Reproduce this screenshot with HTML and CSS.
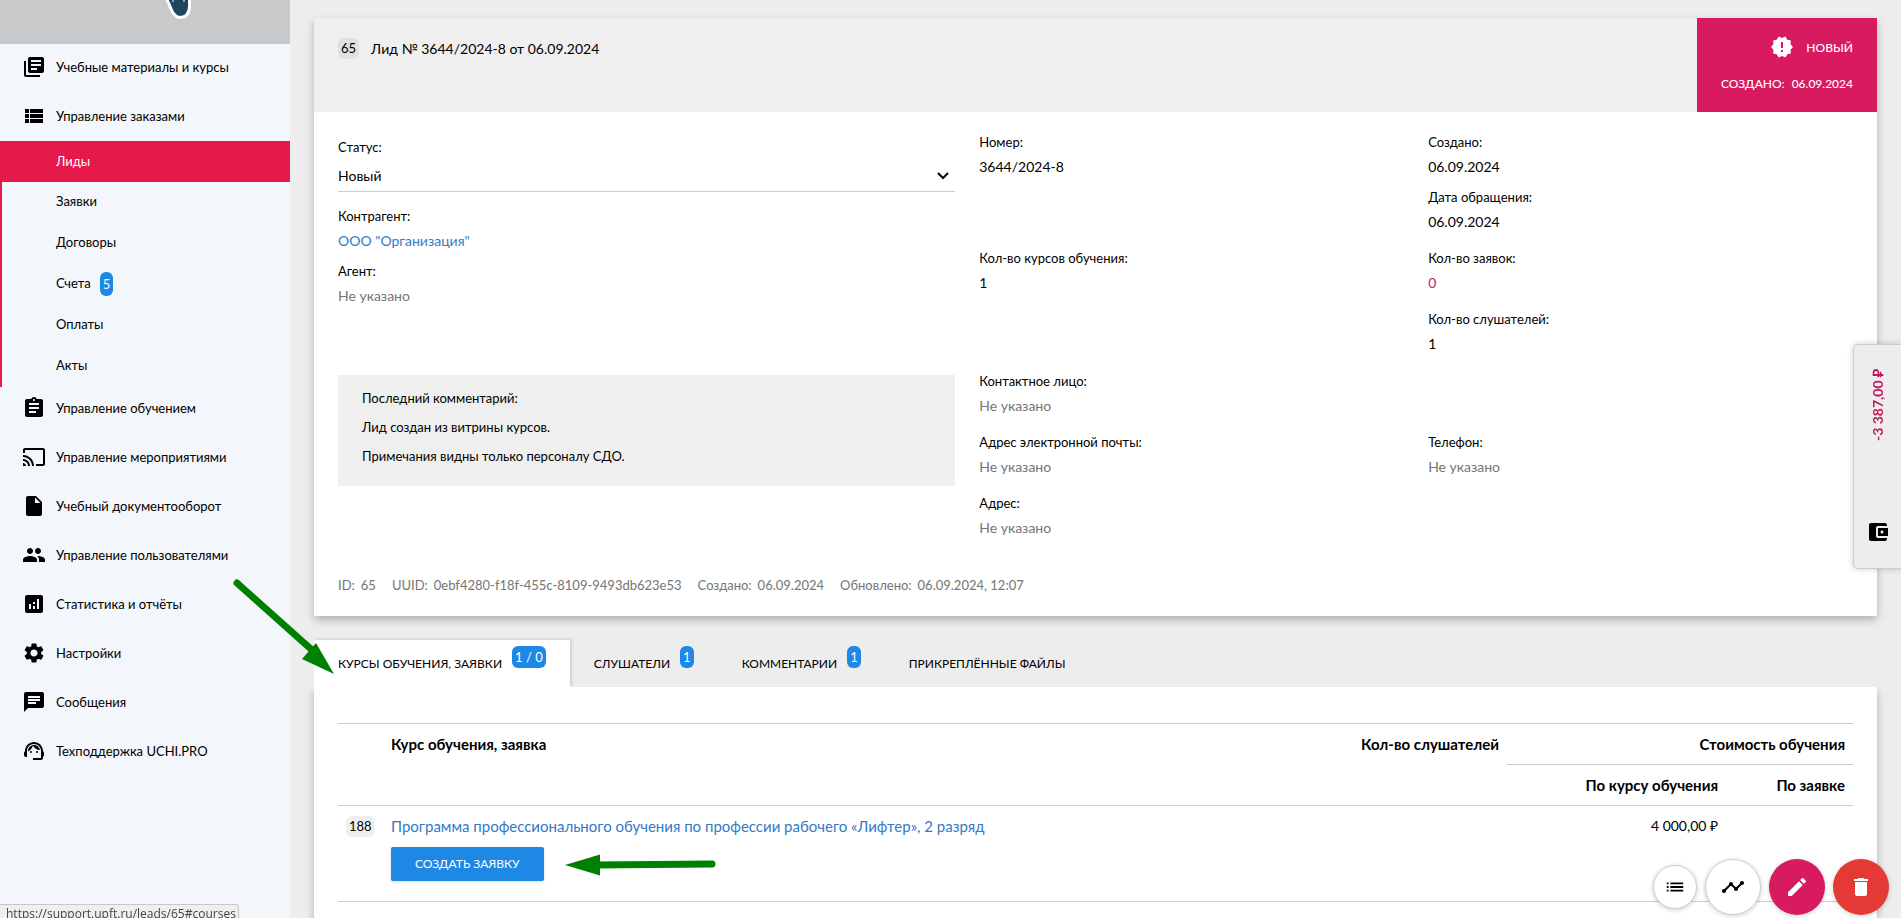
FILE: index.html
```
<!DOCTYPE html>
<html lang="ru">
<head>
<meta charset="utf-8">
<title>Лид № 3644/2024-8 от 06.09.2024</title>
<meta name="viewport" content="width=device-width, initial-scale=1">
<link rel="stylesheet" href="styles.css">
</head>
<body>
<div class="app">
  <aside class="sidebar">
    <div class="brand">
      <svg class="brand-mark" viewBox="0 0 30 20" aria-hidden="true"><path d="M2 -3 L4 2 C6 4 7 16 15 17.500 C23 17.500 25.500 12 25.500 6 V-3 Z" fill="#20465f" stroke="#fff" stroke-width="3"/><path d="M9 0v2M20 0v2" stroke="#fff" stroke-width="1"/></svg>
    </div>
    <nav>
      <ul class="menu">
        <li><a class="menu-link" href="#"><svg class="icon" viewBox="0 0 24 24"><path d="M4 6H2v14c0 1.100.9 2 2 2h14v-2H4V6zm16-4H8c-1.100 0-2 .9-2 2v12c0 1.100.9 2 2 2h12c1.100 0 2-.9 2-2V4c0-1.100-.9-2-2-2zm-1 9H9V9h10v2zm-4 4H9v-2h6v2zm4-8H9V5h10v2z"/></svg>Учебные материалы и курсы</a></li>
        <li><a class="menu-link" href="#"><svg class="icon" viewBox="0 0 24 24"><path d="M3 14h4v-4H3v4zm0 5h4v-4H3v4zM3 9h4V5H3v4zm5 5h13v-4H8v4zm0 5h13v-4H8v4zM8 5v4h13V5H8z"/></svg>Управление заказами</a>
          <ul class="submenu">
            <li><a class="submenu-link active" href="#">Лиды</a></li>
            <li><a class="submenu-link" href="#">Заявки</a></li>
            <li><a class="submenu-link" href="#">Договоры</a></li>
            <li><a class="submenu-link" href="#">Счета <span class="badge">5</span></a></li>
            <li><a class="submenu-link" href="#">Оплаты</a></li>
            <li><a class="submenu-link" href="#">Акты</a></li>
          </ul>
        </li>
        <li><a class="menu-link" href="#"><svg class="icon" viewBox="0 0 24 24"><path d="M19 3h-4.180C14.400 1.840 13.300 1 12 1c-1.300 0-2.400.84-2.820 2H5c-1.100 0-2 .9-2 2v14c0 1.100.9 2 2 2h14c1.100 0 2-.9 2-2V5c0-1.100-.9-2-2-2zm-7 0c.55 0 1 .45 1 1s-.45 1-1 1-1-.45-1-1 .45-1 1-1zm2 14H7v-2h7v2zm3-4H7v-2h10v2zm0-4H7V7h10v2z"/></svg>Управление обучением</a></li>
        <li><a class="menu-link" href="#"><svg class="icon" viewBox="0 0 24 24"><path d="M21 3H3c-1.100 0-2 .9-2 2v3h2V5h18v14h-7v2h7c1.100 0 2-.9 2-2V5c0-1.100-.9-2-2-2zM1 18v3h3c0-1.660-1.340-3-3-3zm0-4v2c2.760 0 5 2.240 5 5h2c0-3.870-3.130-7-7-7zm0-4v2c4.970 0 9 4.030 9 9h2c0-6.080-4.930-11-11-11z"/></svg>Управление мероприятиями</a></li>
        <li><a class="menu-link" href="#"><svg class="icon" viewBox="0 0 24 24"><path d="M6 2c-1.100 0-1.990.9-1.990 2L4 20c0 1.100.89 2 1.990 2H18c1.100 0 2-.9 2-2V8l-6-6H6zm7 7V3.500L18.500 9H13z"/></svg>Учебный документооборот</a></li>
        <li><a class="menu-link" href="#"><svg class="icon" viewBox="0 0 24 24"><path d="M16 11c1.660 0 2.990-1.340 2.990-3S17.660 5 16 5c-1.660 0-3 1.340-3 3s1.340 3 3 3zm-8 0c1.660 0 2.990-1.340 2.990-3S9.660 5 8 5C6.340 5 5 6.340 5 8s1.340 3 3 3zm0 2c-2.330 0-7 1.170-7 3.500V19h14v-2.500c0-2.330-4.670-3.500-7-3.500zm8 0c-.29 0-.62.02-.97.05 1.160.84 1.970 1.970 1.970 3.450V19h6v-2.500c0-2.330-4.670-3.500-7-3.500z"/></svg>Управление пользователями</a></li>
        <li><a class="menu-link" href="#"><svg class="icon" viewBox="0 0 24 24"><path d="M19 3H5c-1.100 0-2 .9-2 2v14c0 1.100.9 2 2 2h14c1.100 0 2-.9 2-2V5c0-1.100-.9-2-2-2zM9 17H7v-5h2v5zm4 0h-2v-3h2v3zm0-5h-2v-2h2v2zm4 5h-2V7h2v10z"/></svg>Статистика и отчёты</a></li>
        <li><a class="menu-link" href="#"><svg class="icon" viewBox="0 0 24 24"><path d="M19.140 12.940c.04-.3.06-.61.06-.94 0-.32-.02-.64-.07-.94l2.030-1.580c.18-.14.23-.41.12-.61l-1.920-3.320c-.12-.22-.37-.29-.59-.22l-2.390.96c-.5-.38-1.030-.7-1.620-.94l-.36-2.540c-.04-.24-.24-.41-.48-.41h-3.840c-.24 0-.43.17-.47.41l-.36 2.540c-.59.24-1.130.57-1.620.94l-2.390-.96c-.22-.08-.47 0-.59.22L2.740 8.870c-.12.21-.08.47.12.61l2.030 1.580c-.05.3-.09.63-.09.94s.02.64.07.94l-2.030 1.580c-.18.14-.23.41-.12.61l1.920 3.320c.12.22.37.29.59.22l2.390-.96c.5.38 1.030.7 1.620.94l.36 2.540c.05.24.24.41.48.41h3.840c.24 0 .44-.17.47-.41l.36-2.540c.59-.24 1.130-.56 1.620-.94l2.390.96c.22.08.47 0 .59-.22l1.920-3.320c.12-.22.07-.47-.12-.61l-2.010-1.580zM12 15.600c-1.980 0-3.600-1.620-3.600-3.600s1.620-3.600 3.600-3.600 3.600 1.620 3.600 3.600-1.620 3.600-3.600 3.600z"/></svg>Настройки</a></li>
        <li><a class="menu-link" href="#"><svg class="icon" viewBox="0 0 24 24"><path d="M20 2H4c-1.100 0-1.990.9-1.990 2L2 22l4-4h14c1.100 0 2-.9 2-2V4c0-1.100-.9-2-2-2zM6 9h12v2H6V9zm8 5H6v-2h8v2zm4-6H6V6h12v2z"/></svg>Сообщения</a></li>
        <li><a class="menu-link" href="#"><svg class="icon" viewBox="0 0 24 24"><path d="M21 12.220C21 6.730 16.740 3 12 3c-4.690 0-9 3.650-9 9.280-.6.34-1 .98-1 1.720v2c0 1.100.9 2 2 2h1v-6.100c0-3.870 3.130-7 7-7s7 3.130 7 7V19h-8v2h8c1.100 0 2-.9 2-2v-1.220c.59-.31 1-.92 1-1.640v-2.300c0-.7-.41-1.310-1-1.620z"/><circle cx="9" cy="13" r="1"/><circle cx="15" cy="13" r="1"/><path d="M18 11.030C17.520 8.180 15.040 6 12.050 6c-3.030 0-6.290 2.510-6.030 6.450 2.470-1.010 4.330-3.210 4.860-5.890 1.310 2.630 4 4.440 7.120 4.470z"/></svg>Техподдержка UCHI.PRO</a></li>
      </ul>
    </nav>
  </aside>

  <main class="content">
    <section class="card">
      <header class="card-head">
        <h1 class="card-title"><span class="chip chip-dark">65</span>Лид № 3644/2024-8 от 06.09.2024</h1>
        <div class="state">
          <div class="state-name"><svg class="icon" viewBox="0 0 24 24"><path fill-rule="evenodd" d="M23 12l-2.440-2.780.34-3.680-3.610-.82-1.890-3.180L12 3 8.600 1.540 6.710 4.720l-3.610.81.34 3.680L1 12l2.440 2.780-.34 3.690 3.610.82 1.890 3.180L12 21l3.400 1.460 1.890-3.180 3.610-.82-.34-3.680L23 12zm-10 5h-2v-2h2v2zm0-4h-2V7h2v6z"/></svg>НОВЫЙ</div>
          <div class="state-date"><span>СОЗДАНО:</span><span>06.09.2024</span></div>
        </div>
      </header>

      <div class="card-body">
        <div class="cols">
          <div class="cell">
            <div class="select-field">
              <label class="label" for="status">Статус:</label>
              <div class="select-wrap">
                <select id="status" class="select"><option>Новый</option></select>
                <svg class="select-arrow" viewBox="0 0 12 8" aria-hidden="true"><path d="M1 1l5 5 5-5" fill="none" stroke="#000" stroke-width="2"/></svg>
              </div>
            </div>
            <div class="field"><div class="label">Контрагент:</div><div class="value"><a class="link" href="#">ООО "Организация"</a></div></div>
            <div class="field"><div class="label">Агент:</div><div class="value muted">Не указано</div></div>
          </div>
          <div class="rows">
            <div class="row">
              <div class="field"><div class="label">Номер:</div><div class="value">3644/2024-8</div></div>
              <div>
                <div class="field"><div class="label">Создано:</div><div class="value">06.09.2024</div></div>
                <div class="field"><div class="label">Дата обращения:</div><div class="value">06.09.2024</div></div>
              </div>
            </div>
            <div class="row">
              <div class="field"><div class="label">Кол-во курсов обучения:</div><div class="value">1</div></div>
              <div class="field"><div class="label">Кол-во заявок:</div><div class="value alert">0</div></div>
            </div>
            <div class="row">
              <div></div>
              <div class="field"><div class="label">Кол-во слушателей:</div><div class="value">1</div></div>
            </div>
          </div>
        </div>
        <div class="cols cols-contact">
          <div class="cell">
            <div class="comment">
              <p>Последний комментарий:</p>
              <p>Лид создан из витрины курсов.</p>
              <p>Примечания видны только персоналу СДО.</p>
            </div>
          </div>
          <div class="rows">
            <div class="row">
              <div class="field"><div class="label">Контактное лицо:</div><div class="value muted">Не указано</div></div>
            </div>
            <div class="row">
              <div class="field"><div class="label">Адрес электронной почты:</div><div class="value muted">Не указано</div></div>
              <div class="field"><div class="label">Телефон:</div><div class="value muted">Не указано</div></div>
            </div>
            <div class="row">
              <div class="field"><div class="label">Адрес:</div><div class="value muted">Не указано</div></div>
            </div>
          </div>
        </div>
        <footer class="meta">
          <span class="meta-item"><span>ID:</span><span>65</span></span>
          <span class="meta-item"><span>UUID:</span><span>0ebf4280-f18f-455c-8109-9493db623e53</span></span>
          <span class="meta-item"><span>Создано:</span><span>06.09.2024</span></span>
          <span class="meta-item"><span>Обновлено:</span><span>06.09.2024, 12:07</span></span>
        </footer>
      </div>
    </section>

    <section class="tabs">
      <div class="tab-list" role="tablist">
        <button class="tab selected" role="tab" aria-selected="true">КУРСЫ ОБУЧЕНИЯ, ЗАЯВКИ <span class="badge">1 / 0</span></button>
        <button class="tab" role="tab">СЛУШАТЕЛИ <span class="badge">1</span></button>
        <button class="tab" role="tab">КОММЕНТАРИИ <span class="badge">1</span></button>
        <button class="tab" role="tab">ПРИКРЕПЛЁННЫЕ ФАЙЛЫ</button>
      </div>
      <div class="panel" role="tabpanel">
        <table class="table">
          <thead>
            <tr>
              <th class="col-id" rowspan="2"></th>
              <th rowspan="2">Курс обучения, заявка</th>
              <th class="num" rowspan="2">Кол-во слушателей</th>
              <th class="num group" colspan="2">Стоимость обучения</th>
            </tr>
            <tr>
              <th class="num col-course">По курсу обучения</th>
              <th class="num col-order">По заявке</th>
            </tr>
          </thead>
          <tbody>
            <tr>
              <td><span class="chip">188</span></td>
              <td><a class="link course" href="#">Программа профессионального обучения по профессии рабочего «Лифтер», 2 разряд</a>
                <div><button class="button" type="button">СОЗДАТЬ ЗАЯВКУ</button></div></td>
              <td class="num"></td>
              <td class="num">4 000,00 ₽</td>
              <td class="num"></td>
            </tr>
          </tbody>
        </table>
      </div>
    </section>
  </main>
</div>

<aside class="wallet">
  <span class="wallet-sum">-3 387,00 ₽</span>
  <svg class="icon" viewBox="0 0 24 24"><path d="M21 18v1c0 1.100-.9 2-2 2H5c-1.110 0-2-.9-2-2V5c0-1.100.89-2 2-2h14c1.100 0 2 .9 2 2v1h-9c-1.110 0-2 .9-2 2v8c0 1.100.89 2 2 2h9zm-9-2h10V8H12v8zm4-2.500c-.83 0-1.500-.67-1.500-1.500s.67-1.500 1.500-1.500 1.500.67 1.500 1.500-.67 1.500-1.500 1.500z"/></svg>
</aside>

<div class="fabs">
  <button class="fab fab-small" type="button" aria-label="Список"><svg class="icon-small" viewBox="0 0 24 24"><path d="M3 13h2v-2H3v2zm0 4h2v-2H3v2zm0-8h2V7H3v2zm4 4h14v-2H7v2zm0 4h14v-2H7v2zM7 7v2h14V7H7z"/></svg></button>
  <button class="fab" type="button" aria-label="История"><svg class="icon" viewBox="0 0 24 24"><path d="M23 8c0 1.100-.9 2-2 2-.18 0-.35-.02-.51-.07l-3.560 3.550c.05.16.07.34.07.52 0 1.100-.9 2-2 2s-2-.9-2-2c0-.18.02-.36.07-.52l-2.550-2.550c-.16.05-.34.07-.52.07s-.36-.02-.52-.07l-4.550 4.560c.05.16.07.33.07.51 0 1.100-.9 2-2 2s-2-.9-2-2 .9-2 2-2c.18 0 .35.02.51.07l4.560-4.550C8.020 9.360 8 9.180 8 9c0-1.100.9-2 2-2s2 .9 2 2c0 .18-.02.36-.07.52l2.550 2.550c.16-.05.34-.07.52-.07s.36.02.52.07l3.550-3.560C19.020 8.350 19 8.180 19 8c0-1.100.9-2 2-2s2 .9 2 2z"/></svg></button>
  <button class="fab fab-edit" type="button" aria-label="Изменить"><svg class="icon" viewBox="0 0 24 24"><path d="M3 17.250V21h3.750L17.810 9.940l-3.750-3.750L3 17.250zM20.710 7.040c.39-.39.39-1.020 0-1.410l-2.340-2.340c-.39-.39-1.020-.39-1.410 0l-1.830 1.830 3.750 3.750 1.830-1.830z"/></svg></button>
  <button class="fab fab-delete" type="button" aria-label="Удалить"><svg class="icon" viewBox="0 0 24 24"><path d="M6 19c0 1.100.9 2 2 2h8c1.100 0 2-.9 2-2V7H6v12zM19 4h-3.500l-1-1h-5l-1 1H5v2h14V4z"/></svg></button>
</div>

<div class="url-hint">https://support.upft.ru/leads/65#courses</div>

<svg class="pointer pointer-tab" viewBox="0 0 108 100" aria-hidden="true"><path d="M7 7L82 74" stroke="#008000" stroke-width="7" stroke-linecap="round"/><path d="M104 98L86 67 72 83z" fill="#008000"/></svg>
<svg class="pointer pointer-button" viewBox="0 0 152 24" aria-hidden="true"><path d="M30 12L147 11" stroke="#008000" stroke-width="7" stroke-linecap="round"/><path d="M0 12L35 1.500V22.500z" fill="#008000"/></svg>
</body>
</html>
```
FILE: styles.css
```
* { box-sizing: border-box; }

body {
  margin: 0;
  height: 100vh;
  overflow: hidden;
  background: #ededed;
  color: #000;
  font: 14px/25px Lato, "Open Sans", sans-serif;
}

ul { margin: 0; padding: 0; list-style: none; }
a { color: inherit; text-decoration: none; }
button, select { font: inherit; color: inherit; }

.icon { width: 24px; height: 24px; fill: currentColor; flex: none; }
.icon-small { width: 22px; height: 22px; fill: currentColor; flex: none; }
.link { color: #3379c8; }
.course { font-size: 15px; }
.muted { color: #757575; }
.alert { color: #c2185b; }

.app { display: flex; height: 100%; }

/* Sidebar */
.sidebar { flex: none; width: 290px; background: #f3f6fa; font-size: 13px; }
.brand { height: 44px; background: #c8c9ca; padding-left: 164px; }
.brand-mark { display: block; width: 30px; height: 20px; }
.menu { display: flex; flex-direction: column; gap: 1px; }
.menu-link { display: flex; align-items: center; gap: 10px; height: 48px; padding: 0 0 2px 22px; }
.submenu { margin-bottom: -3px; border-left: 2px solid #e5194b; }
.submenu-link { display: flex; align-items: center; gap: 9px; height: 41px; padding: 0 0 2px 54px; }
.submenu-link.active { margin-left: -2px; padding: 0 0 0 56px; background: #e5194b; color: #fff; }

.badge {
  display: inline-block;
  padding: 0 3px;
  border-radius: 6px;
  background: #1e88e5;
  color: #fff;
  font-size: 13px;
  line-height: 22px;
}
.submenu-link .badge { line-height: 24px; }

/* Cards */
.content { flex: 1; min-width: 0; padding: 18px 24px 0; }
.card { background: #fff; box-shadow: 0 4px 8px rgba(0, 0, 0, .25); }
.card-head { display: flex; justify-content: space-between; background: #efefef; }
.card-title { display: flex; align-items: center; gap: 12px; height: 24px; margin: 18px 24px; font-size: 14px; font-weight: 400; }
.chip { display: inline-block; padding: 0 3px; border-radius: 6px; background: #efefef; font-size: 13px; line-height: 21px; }
.chip-dark { background: #e1e1e1; }
.state { padding: 16px 24px 6px; background: #d81b60; color: #fff; text-align: right; font-size: 12px; font-weight: 500; }
.state-name { display: flex; align-items: center; justify-content: flex-end; gap: 12px; height: 26px; }
.state-date { display: flex; gap: 7px; height: 46px; align-items: center; }

.card-body { padding: 18px 24px; }
.cols { display: grid; grid-template-columns: 5fr 7fr; margin: 0 -12px; }
.cols-contact { margin-top: 1px; }
.cell { padding: 0 12px; }
.row { display: grid; grid-template-columns: 1fr 1fr; padding-bottom: 6px; }
.row > * { padding: 0 12px; }
.field, .row > .field { padding-bottom: 7px; }
.label { display: block; font-size: 13px; line-height: 25px; }
.value { line-height: 23px; }
.select-field { padding-top: 5px; margin-bottom: 12px; border-bottom: 1px solid #ccc; }
.select-wrap { position: relative; }
.select { display: block; width: 100%; height: 31px; padding: 0; border: 0; background: none; appearance: none; font-size: 14px; }
.select-arrow { position: absolute; right: 6px; top: 12px; width: 12px; height: 8px; pointer-events: none; }
.comment { margin-top: 6px; padding: 9px 24px 15px; background: #efefef; font-size: 13px; line-height: 29px; }
.comment p { margin: 0; }
.meta { display: flex; flex-wrap: wrap; gap: 16px; margin-top: 21px; color: #757575; font-size: 13px; }
.meta-item { display: flex; gap: 6px; }

/* Tabs */
.tabs { margin-top: 24px; }
.tab-list { display: flex; }
.tab { display: flex; align-items: center; gap: 10px; height: 47px; padding: 0 24px; border: 0; background: none; font-size: 12px; }
.tab .badge { margin-bottom: 13px; }
.tab.selected { background: #fff; box-shadow: 2px -1px 3px rgba(0, 0, 0, .12); }
.panel { min-height: 400px; padding: 36px 24px; background: #fff; box-shadow: 0 4px 8px rgba(0, 0, 0, .25); clip-path: inset(0 -12px -12px -12px); }

.table { width: 100%; border-collapse: collapse; border-top: 1px solid #ccc; }
.table th, .table td { padding: 8px; border-bottom: 1px solid #ccc; text-align: left; vertical-align: top; line-height: 24px; }
.table th { font-size: 15px; }
.table .num { text-align: right; }
.col-id { width: 45px; }
.col-course { width: 219px; }
.col-order { width: 127px; }
.table tbody td { padding-bottom: 20px; }
.button { height: 34px; margin-top: 8px; padding: 0 24px; border: 0; border-radius: 2px; background: #1e88e5; color: #fff; font-size: 12px; box-shadow: 0 1px 3px rgba(0, 0, 0, .15); }

/* Floating elements */
.wallet {
  position: fixed;
  right: 0;
  top: 344px;
  display: flex;
  flex-direction: column;
  justify-content: space-between;
  align-items: center;
  width: 48px;
  height: 225px;
  padding: 24px 0;
  border: 1px solid #ccc;
  border-right: 0;
  border-radius: 5px 0 0 5px;
  background: #ededed;
  box-shadow: 0 0 6px rgba(0, 0, 0, .2);
}
.wallet-sum { writing-mode: vertical-rl; transform: rotate(180deg); color: #c2185b; font-weight: 700; }
.fabs { position: fixed; right: 12px; bottom: 3px; display: flex; align-items: center; gap: 8px; }
.fab { display: flex; align-items: center; justify-content: center; width: 56px; height: 56px; padding: 0; border: 1px solid #ccc; border-radius: 50%; background: #fff; box-shadow: 0 1px 5px rgba(0, 0, 0, .2); }
.fab-small { width: 44px; height: 44px; }
.fab-edit { border: 0; background: #d81b60; color: #fff; }
.fab-delete { border: 0; background: #e53935; color: #fff; }
.url-hint { position: fixed; left: 0; bottom: 0; height: 14px; padding: 0 2px 0 6px; overflow: hidden; border: 1px solid #c8c8c8; border-width: 1px 1px 0 0; border-radius: 0 4px 0 0; background: #efefef; color: #444; font: 12px/18px "Open Sans", sans-serif; }

.pointer { position: fixed; fill: none; pointer-events: none; }
.pointer-tab { left: 230px; top: 576px; width: 108px; height: 100px; }
.pointer-button { left: 565px; top: 853px; width: 152px; height: 24px; }
```
